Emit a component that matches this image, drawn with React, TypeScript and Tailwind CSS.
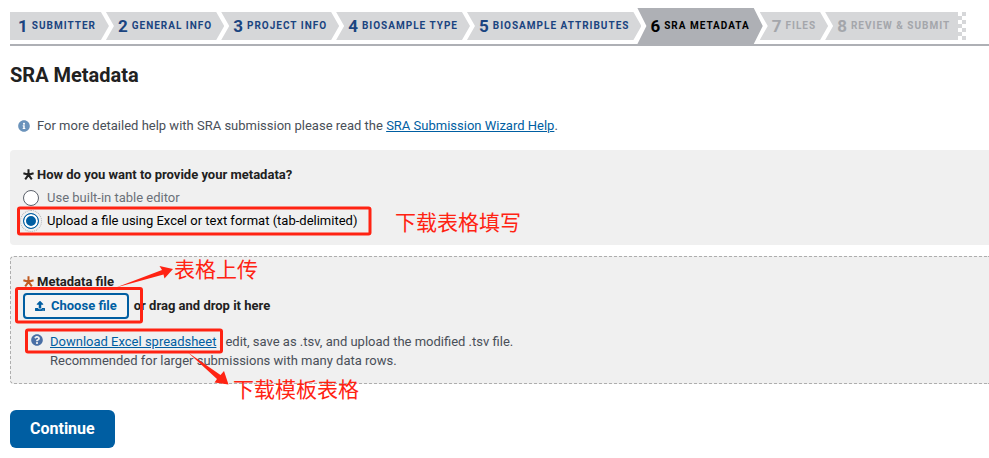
import { useState } from "react"
import clsx from "clsx"
import { FaInfoCircle, FaQuestionCircle, FaUpload } from "react-icons/fa"

type Step = {
    id: number
    label: string
    state: "done" | "active" | "pending"
}

const steps: Step[] = [
    { id: 1, label: "Submitter", state: "done" },
    { id: 2, label: "General info", state: "done" },
    { id: 3, label: "Project info", state: "done" },
    { id: 4, label: "Biosample type", state: "done" },
    { id: 5, label: "Biosample attributes", state: "done" },
    { id: 6, label: "SRA metadata", state: "active" },
    { id: 7, label: "Files", state: "pending" },
    { id: 8, label: "Review & submit", state: "pending" },
]

const sources = [
    { value: "table", label: "Use built-in table editor" },
    { value: "file", label: "Upload a file using Excel or text format (tab-delimited)" },
]

function stepShape(step: Step, index: number) {
    if (index === 0) return "pl-2 pr-[13px] [clip-path:polygon(0_0,calc(100%-8px)_0,100%_50%,calc(100%-8px)_100%,0_100%)]"
    if (step.state === "active")
        return "-ml-1 pl-[13px] pr-[13px] [clip-path:polygon(0_0,calc(100%-9px)_0,100%_50%,calc(100%-9px)_100%,0_100%,9px_50%)]"
    if (index === steps.length - 1) return "-ml-[3px] pl-3 pr-2 [clip-path:polygon(0_0,100%_0,100%_100%,0_100%,8px_50%)]"
    return "-ml-[3px] pl-3 pr-3 [clip-path:polygon(0_0,calc(100%-8px)_0,100%_50%,calc(100%-8px)_100%,0_100%,8px_50%)]"
}

function Wizard() {
    return (
        <nav className="border-b-2 border-[#aeb0b5]">
            <ol className="flex h-9 items-stretch">
                {steps.map((step, i) => (
                    <li
                        key={step.id}
                        className={clsx(
                            "flex items-center gap-1 whitespace-nowrap font-bold",
                            stepShape(step, i),
                            step.state === "active" ? "bg-[#aeb0b5] text-black" : "my-1 bg-[#d6d7d9]",
                            step.state === "done" && "text-[#1a4480]",
                            step.state === "pending" && "text-[#a4a6ab]",
                        )}
                    >
                        <span className="text-[17px]">{step.id}</span>
                        <span className="text-[10px] uppercase tracking-widest">{step.label}</span>
                    </li>
                ))}
                {/* checkered finish */}
                <li
                    aria-hidden="true"
                    className="my-1 w-2 bg-[repeating-conic-gradient(#d6d7d9_0_25%,#fff_0_50%)] bg-size-[8px_8px]"
                />
            </ol>
        </nav>
    )
}

function Star({ className }: { className: string }) {
    return (
        <svg viewBox="0 0 11 11" className={clsx("mb-0.5 size-[11px] shrink-0", className)} aria-hidden="true">
            <path
                d="M5.5 5.8V.2M5.5 5.8L.4 4.2M5.5 5.8l5.1-1.6M5.5 5.8L2.2 10.4M5.5 5.8l3.3 4.6"
                fill="none"
                stroke="currentColor"
                strokeWidth="2"
            />
        </svg>
    )
}

// red marks laid over the form
function Notes() {
    return (
        <div className="pointer-events-none absolute inset-0 font-['Noto_Sans_CJK_SC',sans-serif] text-[21px] leading-7 whitespace-nowrap text-[#ff2313]">
            <svg width="400" height="458" className="absolute top-0 left-0" aria-hidden="true">
                <g fill="none" stroke="currentColor" strokeWidth="3" strokeLinejoin="round">
                    <rect x="18.5" y="208" width="351.5" height="26" rx="1.5" />
                    <rect x="16.5" y="288.5" width="125" height="33.5" rx="1.5" />
                    <rect x="26.5" y="330" width="195" height="22" rx="1.5" />
                </g>
                <g fill="currentColor">
                    <path d="M116 287.5L162 270L159.500 266L173 269L164.500 278.500L163.500 274.500Z" />
                    <path d="M188 352.500L220.500 375L224 371L228.500 384.500L214.500 382.500L217 379Z" />
                </g>
            </svg>
            <span className="absolute top-[207px] left-[395px]">下载表格填写</span>
            <span className="absolute top-[254px] left-[174px]">表格上传</span>
            <span className="absolute top-[374px] left-[233px]">下载模板表格</span>
        </div>
    )
}

export default function App() {
    const [source, setSource] = useState("file")

    return (
        <div className="relative min-h-screen overflow-hidden bg-white pt-2 pb-2 pl-2.5 font-[Roboto,sans-serif] text-[13px] leading-5 text-[#494f58]">
            <Wizard />

            <main>
                <h1 className="mt-[15px] text-xl leading-7 font-bold text-[#212121]">SRA Metadata</h1>

                <p className="mt-[23px] flex items-center gap-[7px] pt-1 pl-2">
                    <FaInfoCircle className="size-3 shrink-0 text-[#6b93bb]" />
                    <span>
                        For more detailed help with SRA submission please read the{" "}
                        <a href="#help" className="text-[#005ea2] underline">SRA Submission Wizard Help</a>.
                    </span>
                </p>

                <fieldset className="mt-3.5 rounded-l bg-[#f0f0f0] px-[13px] pt-[15px] pb-[13px]">
                    <legend className="float-left flex w-full items-center gap-[3px] font-bold text-[#212121]">
                        <Star className="text-[#212121]" />
                        How do you want to provide your metadata?
                    </legend>
                    <div className="clear-both flex flex-col pt-px">
                        {sources.map((s) => (
                            <label key={s.value} className="flex h-[23px] items-center gap-2 text-[#6b7079] has-checked:text-black">
                                <input
                                    type="radio"
                                    name="source"
                                    value={s.value}
                                    checked={source === s.value}
                                    onChange={() => setSource(s.value)}
                                    className="size-4 appearance-none rounded-full border border-[#5b616b] bg-white outline-offset-2 outline-[#aeb0b5] checked:border-[#005ea2] checked:bg-[#005ea2] checked:shadow-[inset_0_0_0_2px_white] checked:outline-1 checked:outline-dotted"
                                />
                                {s.label}
                            </label>
                        ))}
                    </div>
                </fieldset>

                <section className="mt-[11px] rounded-l border border-r-0 border-dashed border-[#aeaeae] bg-[#f0f0f0] px-3 pt-[15px] pb-[13px]">
                    <h2 className="flex items-center gap-[3px] font-bold text-[#212121]">
                        <Star className="text-[#c05a20]" />
                        Metadata file
                    </h2>
                    <div className="mt-px flex items-center gap-[5px] font-bold text-[#212121]">
                        <button
                            type="button"
                            className="flex h-[26px] items-center gap-1.5 rounded border-2 border-[#005ea2] bg-[#f5f5f5] px-2.5 text-[#005ea2]"
                        >
                            <FaUpload className="size-2.5" />
                            Choose file
                        </button>
                        or drag and drop it here
                    </div>
                    <div className="mt-[13px] flex gap-[7px] pl-2 leading-[19px]">
                        <FaQuestionCircle className="mt-0.5 size-3 shrink-0 text-[#4a6fa5]" />
                        <p>
                            <a href="#template" className="text-[#005ea2] underline">Download Excel spreadsheet</a> , edit, save as .tsv, and
                            upload the modified .tsv file.
                            <br />
                            Recommended for larger submissions with many data rows.
                        </p>
                    </div>
                </section>

                <button type="button" className="mt-[26px] h-[38px] rounded-md bg-[#005ea2] px-5 text-base font-bold text-white">
                    Continue
                </button>
            </main>

            <Notes />
        </div>
    )
}
